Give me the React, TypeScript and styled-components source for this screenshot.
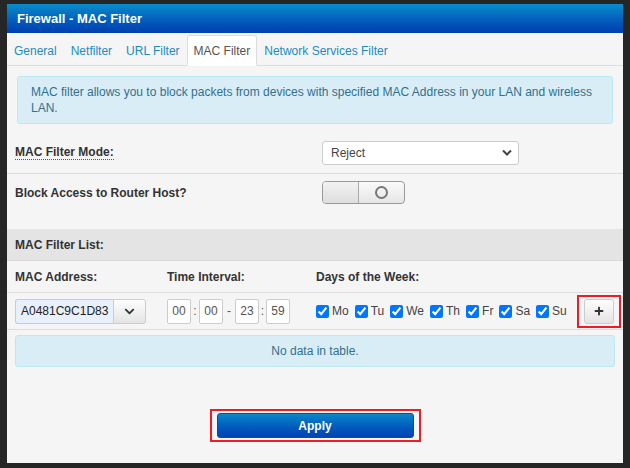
import React from 'react';
import styled, { createGlobalStyle } from 'styled-components';
import { FaChevronDown, FaPlus } from 'react-icons/fa';

const GlobalStyle = createGlobalStyle`
  html, body {
    margin: 0;
    padding: 0;
    background: #262626;
  }
  body {
    font-family: "Liberation Sans", Arial, sans-serif;
    font-size: 12px;
    color: #333;
  }
`;

const Page = styled.div`
  padding: 4px 7px 5px 7px;
  width: 616px;
`;

const Panel = styled.div`
  background: #f5f5f5;
  height: 459px;
  display: flex;
  flex-direction: column;
`;

const Header = styled.div`
  height: 29px;
  display: flex;
  align-items: center;
  padding-left: 10px;
  background: linear-gradient(to bottom, #0a8ccb 0%, #0052b9 70%, #003fb0 100%);
  color: #fff;
  font-size: 13px;
  font-weight: bold;
`;

const Tabs = styled.div`
  height: 32px;
  display: flex;
  align-items: flex-end;
  border-bottom: 1px solid #ddd;
`;

const Tab = styled.div<{ $active?: boolean }>`
  height: 31px;
  box-sizing: border-box;
  display: flex;
  align-items: center;
  padding: 0 6px;
  margin-bottom: -1px;
  color: ${(p) => (p.$active ? '#555' : '#1c8ac4')};
  background: ${(p) => (p.$active ? '#fff' : 'transparent')};
  border: 1px solid ${(p) => (p.$active ? '#ddd' : 'transparent')};
  border-bottom-color: ${(p) => (p.$active ? '#fff' : 'transparent')};
  border-radius: 3px 3px 0 0;
`;

const Alert = styled.div<{ $center?: boolean }>`
  background: #d9edf7;
  border: 1px solid #bce8f1;
  border-radius: 3px;
  color: #31708f;
  line-height: 16px;
  padding: 7px 13px;
  text-align: ${(p) => (p.$center ? 'center' : 'left')};
`;

const Intro = styled.div`
  padding: 10px 10px 8px 10px;
`;

const FormRow = styled.div<{ $height: number; $border?: boolean }>`
  height: ${(p) => p.$height}px;
  box-sizing: border-box;
  display: grid;
  grid-template-columns: 307px 1fr;
  align-items: center;
  padding: 0 8px;
  border-bottom: ${(p) => (p.$border ? '1px solid #ddd' : 'none')};
`;

const Label = styled.span<{ $dotted?: boolean }>`
  font-weight: bold;
  color: #333;
  justify-self: start;
  border-bottom: ${(p) => (p.$dotted ? '1px dotted #555' : 'none')};
  line-height: 14px;
`;

const Select = styled.div`
  width: 197px;
  height: 24px;
  box-sizing: border-box;
  background: #fff;
  border: 1px solid #ccc;
  border-radius: 3px;
  display: flex;
  align-items: center;
  justify-content: space-between;
  padding: 0 6px 0 8px;
  color: #444;
`;

const Toggle = styled.div`
  width: 83px;
  height: 23px;
  box-sizing: border-box;
  border: 1px solid #999;
  border-radius: 4px;
  display: flex;
  overflow: hidden;
  background: linear-gradient(to bottom, #fafafa, #e6e6e6);
`;

const ToggleOff = styled.span`
  width: 35px;
  border-right: 1px solid #aaa;
  background: linear-gradient(to bottom, #f2f2f2, #dedede);
`;

const ToggleKnob = styled.span`
  flex: 1;
  display: flex;
  align-items: center;
  justify-content: center;
  &::after {
    content: '';
    width: 9px;
    height: 9px;
    border: 2px solid #777;
    border-radius: 50%;
  }
`;

const SectionTitle = styled.div`
  height: 32px;
  box-sizing: border-box;
  background: #e4e4e4;
  border-bottom: 1px solid #dadada;
  display: flex;
  align-items: center;
  padding: 0 8px;
  font-weight: bold;
`;

const ListGrid = styled.div<{ $height: number }>`
  height: ${(p) => p.$height}px;
  box-sizing: border-box;
  display: grid;
  grid-template-columns: 152px 149px 1fr auto;
  align-items: center;
  padding: 0 2px 0 8px;
  border-bottom: 1px solid #ddd;
`;

const Combo = styled.div`
  display: flex;
  width: 131px;
  height: 25px;
`;

const ComboInput = styled.div`
  flex: 1;
  box-sizing: border-box;
  background: #e8f0fe;
  border: 1px solid #ccc;
  border-right: none;
  border-radius: 3px 0 0 3px;
  display: flex;
  align-items: center;
  padding-left: 5px;
  color: #222;
`;

const GrayButton = styled.div<{ $width: number; $radius?: string }>`
  width: ${(p) => p.$width}px;
  height: 25px;
  box-sizing: border-box;
  border: 1px solid #ccc;
  border-radius: ${(p) => p.$radius || '3px'};
  background: linear-gradient(to bottom, #fdfdfd, #e4e4e4);
  display: flex;
  align-items: center;
  justify-content: center;
  color: #333;
`;

const TimeGroup = styled.div`
  display: flex;
  align-items: center;
`;

const TimeBox = styled.div`
  width: 24px;
  height: 25px;
  box-sizing: border-box;
  border: 1px solid #ccc;
  border-radius: 2px;
  background: #fff;
  display: flex;
  align-items: center;
  justify-content: center;
  color: #555;
`;

const Sep = styled.span<{ $w: number }>`
  width: ${(p) => p.$w}px;
  text-align: center;
  color: #555;
`;

const Days = styled.div`
  display: flex;
  align-items: center;
  gap: 6px;
`;

const Day = styled.label`
  display: flex;
  align-items: center;
  gap: 3px;
  color: #444;
  input {
    margin: 0;
    width: 13px;
    height: 13px;
    accent-color: #0075ff;
  }
`;

const Highlight = styled.span`
  display: inline-flex;
  border: 2px solid #ee1c25;
  padding: 2px 5px;
`;

const NoData = styled.div`
  padding: 5px 8px 0 8px;
`;

const Footer = styled.div`
  flex: 1;
  display: flex;
  justify-content: center;
  align-items: flex-start;
  padding-top: 42px;
`;

const ApplyButton = styled.div`
  width: 197px;
  height: 25px;
  box-sizing: border-box;
  border: 1px solid #0a4aa8;
  border-radius: 3px;
  background: linear-gradient(to bottom, #0a86c8 0%, #0058bd 60%, #0044b2 100%);
  color: #fff;
  font-weight: bold;
  display: flex;
  align-items: center;
  justify-content: center;
`;

const SelectChevron = () => (
  <svg width="10" height="7" viewBox="0 0 10 7">
    <path d="M1 1.5 L5 5.5 L9 1.5" fill="none" stroke="#444" strokeWidth="2" />
  </svg>
);

const days = ['Mo', 'Tu', 'We', 'Th', 'Fr', 'Sa', 'Su'];

const App: React.FC = () => {
  return (
    <Page>
      <GlobalStyle />
      <Panel>
        <Header>Firewall - MAC Filter</Header>
        <Tabs>
          <Tab>General</Tab>
          <Tab>Netfilter</Tab>
          <Tab>URL Filter</Tab>
          <Tab $active>MAC Filter</Tab>
          <Tab>Network Services Filter</Tab>
        </Tabs>

        <Intro>
          <Alert>
            MAC filter allows you to block packets from devices with specified MAC Address in your LAN and wireless
            LAN.
          </Alert>
        </Intro>

        <FormRow $height={42} $border>
          <Label $dotted>MAC Filter Mode:</Label>
          <Select>
            <span>Reject</span>
            <SelectChevron />
          </Select>
        </FormRow>

        <FormRow $height={55}>
          <Label style={{ alignSelf: 'start', marginTop: 12 }}>Block Access to Router Host?</Label>
          <Toggle style={{ alignSelf: 'start', marginTop: 7 }}>
            <ToggleOff />
            <ToggleKnob />
          </Toggle>
        </FormRow>

        <SectionTitle>MAC Filter List:</SectionTitle>

        <ListGrid $height={32}>
          <Label>MAC Address:</Label>
          <Label>Time Interval:</Label>
          <Label>Days of the Week:</Label>
          <span />
        </ListGrid>

        <ListGrid $height={37}>
          <Combo>
            <ComboInput>A0481C9C1D83</ComboInput>
            <GrayButton $width={33} $radius="0 3px 3px 0">
              <FaChevronDown size={11} />
            </GrayButton>
          </Combo>
          <TimeGroup>
            <TimeBox>00</TimeBox>
            <Sep $w={8}>:</Sep>
            <TimeBox>00</TimeBox>
            <Sep $w={12}>-</Sep>
            <TimeBox>23</TimeBox>
            <Sep $w={7}>:</Sep>
            <TimeBox>59</TimeBox>
          </TimeGroup>
          <Days>
            {days.map((d) => (
              <Day key={d}>
                <input type="checkbox" checked readOnly />
                {d}
              </Day>
            ))}
          </Days>
          <Highlight>
            <GrayButton $width={30}>
              <FaPlus size={10} />
            </GrayButton>
          </Highlight>
        </ListGrid>

        <NoData>
          <Alert $center>No data in table.</Alert>
        </NoData>

        <Footer>
          <Highlight>
            <ApplyButton>Apply</ApplyButton>
          </Highlight>
        </Footer>
      </Panel>
    </Page>
  );
};

export default App;
